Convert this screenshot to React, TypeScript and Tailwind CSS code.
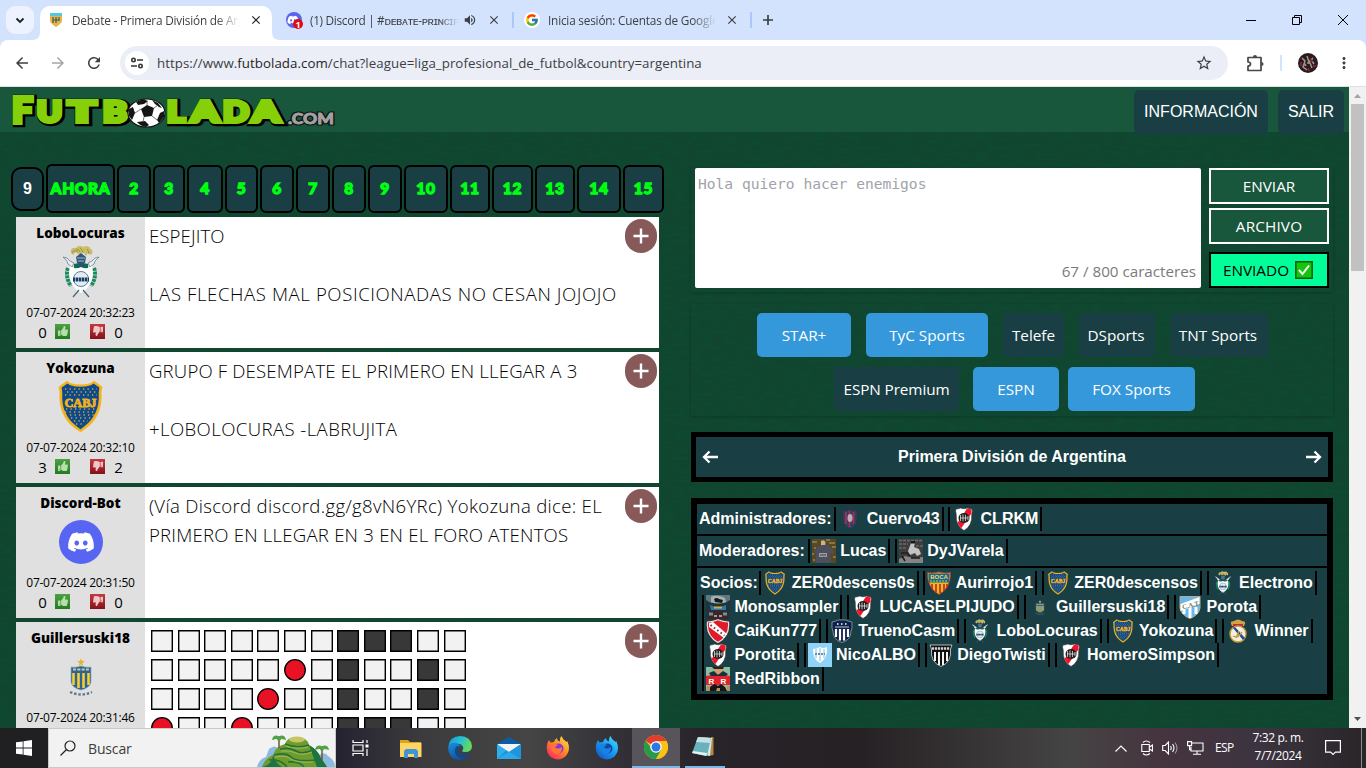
import React from 'react';
import { FcGoogle } from 'react-icons/fc';
import { FaDiscord, FaThumbsDown, FaThumbsUp } from 'react-icons/fa';
import { MdArrowBack, MdArrowForward, MdClose, MdMoreVert, MdRefresh, MdStarBorder, MdVolumeUp } from 'react-icons/md';

type P = { className?: string };

function Boca({ className }: P) {
  return (
    <svg viewBox="0 0 45 53" className={className}>
      <path d="M9 .8 12 3q10 3 21 0L36 .8l8.3 6q-1.3 5-.8 12C43 34 35 45 22.500 52.300 10 45 2 34 1.500 18.800q.5-7-.8-12Z" fill="#f5b21a" />
      <path d="M9.500 3.500 12 5.300q10 3 21 0l2.500-1.800 5.800 4q-.9 5-.5 11C40.300 32 33.500 42 22.500 49.200 11.500 42 4.700 32 4.200 18.500q.4-6-.5-11Z" fill="#0b4a8c" />
      <g stroke="#d9a531" strokeWidth="1.300" strokeDasharray="1.300 3.200">
        <path d="M7 9h32M9 12h29M7 15h32M7 32h31M12 35h24M13 38h20M16 41h14M18 44h9M8 29h30" />
      </g>
      <text x="22.500" y="27" textAnchor="middle" textLength="32" lengthAdjust="spacingAndGlyphs" fontFamily="Liberation Serif" fontWeight="700" fontSize="13" fill="#f5b21a" stroke="#f5b21a" strokeWidth=".9">CABJ</text>
    </svg>
  );
}

function River({ className }: P) {
  return (
    <svg viewBox="0 0 24 24" className={className}>
      <path d="M4 2q3 0 4.500-1Q12 2.500 15.500 1 17 2 20 2q1 2-.2 5Q20.500 19 12 23.500 3.500 19 4.200 7 3 4 4 2Z" fill="#fff" stroke="#333" strokeWidth=".6" />
      <path d="M15 1.500 19.700 2.500l-.3 4L9 21.500 5.500 16Z" fill="#f2142c" />
      <ellipse cx="12" cy="11" rx="5.500" ry="5" fill="#222" />
      <path d="M8.500 8v6M11 7.500v7M13.500 8v6M16 9v4M8 11h8" stroke="#ddd" strokeWidth=".8" />
    </svg>
  );
}

function Gimnasia({ className }: P) {
  return (
    <svg viewBox="0 0 36 53" className={className}>
      <path d="M8 8q-1-6 5-5 3-4 7-1 5-3 8 2 3 2 0 6l-3-2-2 3-3-4-4 3-3-3-3 3Z" fill="#c9bd68" />
      <path d="M9 8q2-4 6-1M17 3q3 2 3 5M24 4q2 2 2 5M13 4q3 0 4 3" stroke="#8e8436" strokeWidth=".8" fill="none" />
      <path d="m13 12 5-4 5 4-1 6h-8Z" fill="#31597a" />
      <path d="M14 13h8M15 16h6" stroke="#cfdfe8" strokeWidth=".7" />
      <path d="m0 12 4 1 3 3 4 2-2 4-4-3-1-3ZM36 12l-4 1-3 3-4 2 2 4 4-3 1-3Z" fill="#e8eef2" stroke="#54738c" strokeWidth=".7" />
      <path d="M11 19q7-2 14 0v6H11Z" fill="#0b6c50" />
      <path d="M15 18h6v4h-6Z" fill="#2f4f70" />
      <path d="M5 23q-3 9 3 18M31 23q3 9-3 18" stroke="#1a8a5e" strokeWidth="4" strokeDasharray="3 .7" fill="none" />
      <path d="M7 21q5 4 11 1 6 3 11-1l1 7q-1 14-12 20Q7 42 6 28Z" fill="#fbfdfd" />
      <path d="m10 52 6-7M26 52l-6-7" stroke="#45667c" strokeWidth="1.200" />
      <circle cx="18" cy="34" r="7.500" fill="#e4ecf1" stroke="#1b5378" strokeWidth=".7" />
      <path d="M10 34.500h16" stroke="#123f66" strokeWidth="4" strokeDasharray="2.400 .6" />
    </svg>
  );
}

function Central({ className }: P) {
  return (
    <svg viewBox="0 0 24 38" className={className}>
      <path d="m12 0 1 3h3l-2.500 2 .8 3L12 6.300 9.700 8l.8-3L8 3h3Z" fill="#e7b52c" />
      <path d="M2 9q4 1 10-1 6 2 10 1v15q-1 6-10 8-9-2-10-8Z" fill="#2f6398" stroke="#8fa9b8" strokeWidth=".7" />
      <path d="M4.500 15v12M9.500 15v15M14.500 15v15M19.500 15v12" stroke="#f3ce36" strokeWidth="2.600" />
      <path d="M4 11.500h16" stroke="#c8cf94" strokeWidth="2" strokeDasharray="3 1.300" />
      <path d="M1 34q11 5 22 0" stroke="#61798a" strokeWidth="2.400" strokeDasharray="2.500 1.800" fill="none" />
    </svg>
  );
}

function Lorenzo({ className }: P) {
  return (
    <svg viewBox="0 0 24 24" className={className}>
      <path d="M6 4q3 1 6-1 3 2 6 1 1 10-1 13-2 3-5 4-3-1-5-4-2-3-1-13Z" fill="#28406f" stroke="#5b3350" strokeWidth=".8" />
      <path d="M8 5v12M11.500 4v16M15.500 5v12" stroke="#b13048" strokeWidth="1.600" />
      <ellipse cx="12" cy="11" rx="2.500" ry="4" fill="#c2aab8" />
    </svg>
  );
}

function Independiente({ className }: P) {
  return (
    <svg viewBox="0 0 24 24" className={className}>
      <path d="M1.500 3Q7 3 12 .8 17 3 22.500 3 24 17 12 23.500 0 17 1.500 3Z" fill="#df1a2b" stroke="#f5dcdc" strokeWidth="1.200" />
      <path d="m3 4 4-1 14 12-3 4L3 8Z" fill="#fff" />
      <path d="m4.500 6 14 10.500" stroke="#902c35" strokeWidth="2" strokeDasharray="1.600 2.600" />
    </svg>
  );
}

function Talleres({ className }: P) {
  return (
    <svg viewBox="0 0 24 24" className={className}>
      <path d="M2 3q5-1 6-2h8q1 1 6 2v6l-1 3q0 9-9 11.500Q3 21 3 12L2 9Z" fill="#0e2149" stroke="#bcc5d6" strokeWidth=".6" />
      <path d="M6 10v8M10 10v11.500M14 10v11.500M18 10v8" stroke="#fff" strokeWidth="2.200" />
      <path d="M5 8h14" stroke="#eee" strokeWidth=".8" />
      <path d="M7 5h10" stroke="#fff" strokeWidth="1.500" strokeDasharray="1.500 2.500" />
    </svg>
  );
}

function Tucuman({ className }: P) {
  return (
    <svg viewBox="0 0 24 24" className={className}>
      <path d="M2 1.500h20V13q-1 7-10 10.500Q3 20 2 13Z" fill="#65b9ee" stroke="#b9ab82" />
      <path d="M6 12v7M12 12v11M18 12v7" stroke="#fff" strokeWidth="3" />
      <path d="M2.500 9 21.500 2v7L2.500 16Z" fill="#fff" />
      <text x="4" y="12.500" transform="rotate(-14 12 10)" fontSize="6.500" fontWeight="700" fontFamily="Liberation Serif" fill="#80764a">C.A.T.</text>
    </svg>
  );
}

function Madrid({ className }: P) {
  return (
    <svg viewBox="0 0 24 24" className={className}>
      <path d="M6 7Q3 2 8 2q4-3 8 0 5 0 2 5Z" fill="#d6a144" />
      <path d="M7 6h10" stroke="#b63142" strokeWidth="2" />
      <circle cx="12" cy="15" r="8" fill="#f1efdf" stroke="#c99b37" strokeWidth="1.400" />
      <path d="m7 9 10 12 2-2L9 8Z" fill="#244b9a" />
      <path d="M7 17q5 3 9-4M10 19l3-7" stroke="#c99b37" fill="none" strokeWidth="1.400" />
    </svg>
  );
}

function Riestra({ className }: P) {
  return (
    <svg viewBox="0 0 24 24" className={className}>
      <path d="M1 2h22l-1.500 4Q23 19 12 23.500 1 19 2.500 6Z" fill="#111" stroke="#ddd" strokeWidth=".8" />
      <path d="M6 9v9M10 9v13M14 9v13M18 9v9" stroke="#fff" strokeWidth="1.900" />
      <path d="M3 5.500h18" stroke="#d6d6d6" strokeWidth="2.400" strokeDasharray="2.200 .8" />
    </svg>
  );
}

function BocaColon({ className }: P) {
  return (
    <svg viewBox="0 0 24 24" className={className}>
      <path d="M.5 1.500 5 2l7-1 7 1 4.500-.5Q24 17 12 23.500 0 17 .5 1.500Z" fill="#e8bd1e" stroke="#b42c2e" strokeWidth=".8" />
      <path d="M1.500 2.500h21l-.5 9H2Z" fill="#1c659b" />
      <text x="12" y="7.500" textAnchor="middle" fontSize="6" fontWeight="700" fontFamily="Liberation Sans" fill="#f7dc38">BOCA</text>
      <path d="M3 10h18" stroke="#74b55d" strokeWidth="1.500" strokeDasharray="2 1" />
      <path d="M5 13v5M9 13v8M13 13v9M17 13v7M20 13v3" stroke="#ce2528" strokeWidth="1.700" />
    </svg>
  );
}

function Nico({ className }: P) {
  return (
    <svg viewBox="0 0 24 24" className={className}>
      <path d="M0 0h24v24H0Z" fill="#8fd3f6" />
      <path d="M5 6q4 0 7-2 3 2 7 0 1 11-7 16Q5 17 5 6Z" fill="#fff" />
      <path d="M8 6v9M12 5v13M16 6v9" stroke="#80bee0" />
      <path d="M7 11h10" stroke="#5f93b5" strokeWidth="1.800" strokeDasharray="2 1" />
    </svg>
  );
}

function Mono({ className }: P) {
  return (
    <svg viewBox="0 0 24 24" className={className}>
      <path d="M0 0h24v24H0Z" fill="#22343b" />
      <path d="M0 0h24v5l-5 3H5L0 5Z" fill="#5d787e" />
      <path d="M5 2q6-3 14 1l1 4q-8 3-15 0Z" fill="#a5b2b1" />
      <path d="M8 4q3-2 5 0l4 1-1 3-7-1Z" fill="#17191c" />
      <path d="m4 10 8 3 8-3v5H5Z" fill="#2e77ad" />
      <path d="M8 12.500h8" stroke="#d5b13b" strokeWidth="2" />
      <path d="M4 16h16l2 8H2Z" fill="#3b2528" />
      <path d="M3 19h4M17 19h4" stroke="#7c8c92" strokeWidth="3" />
      <path d="M8 21h3M13 21h3" stroke="#c9c1ba" strokeWidth="1.300" />
    </svg>
  );
}

function Ribbon({ className }: P) {
  return (
    <svg viewBox="0 0 24 24" className={className}>
      <path d="M0 0h24v24H0Z" fill="#8abda1" />
      <path d="M8 0h9v6l-5 3-4-3Z" fill="#d79c6c" />
      <path d="M6 0h12l-1 2H8Z" fill="#262126" />
      <path d="M0 9q12-3 24 0v9H0Z" fill="#e0232c" />
      <path d="m3 6 5-2 4 4 5-4 5 3-2 2H5Z" fill="#1a2f3a" />
      <text x="2.500" y="16.500" fontSize="8" fontWeight="700" fontFamily="Liberation Sans" fill="#fff">R</text>
      <text x="14.500" y="16.500" fontSize="8" fontWeight="700" fontFamily="Liberation Sans" fill="#fff">R</text>
      <path d="m2 24 3-5 4-2 3 2 3-2 4 3 2 4Z" fill="#171518" />
      <path d="M1 19h3v5H0ZM11 21h3v3h-4ZM21 19h3v5h-3Z" fill="#bb8f55" />
    </svg>
  );
}

function Lucas({ className }: P) {
  return (
    <svg viewBox="0 0 24 24" className={className}>
      <path d="M0 0h24v24H0Z" fill="#574a22" />
      <path d="M0 3h5M17 4h6M2 9h2M20 8h4M0 15h2M14 1h4M21 18h3M1 21h2" stroke="#8a7540" strokeWidth="2" />
      <path d="M9 2q3-2 4.500 1l-.5 5H9Z" fill="#d3b08e" />
      <path d="m5 8 5-2h6l5 5 1 4-4-1 1 10H4V14l-2 2 1-5Z" fill="#4c505d" />
      <path d="M7 14h8v4H7Z" fill="#9a9ca0" />
      <path d="M8 16h6" stroke="#3c3e46" />
    </svg>
  );
}

function Varela({ className }: P) {
  return (
    <svg viewBox="0 0 24 24" className={className}>
      <path d="M0 0h24v24H0Z" fill="#3e3e3e" />
      <path d="M0 1.500h24M0 5h9M17 7h7M0 9h8" stroke="#686868" strokeWidth="1.500" strokeDasharray="3 1" />
      <path d="M12 4h4l-1 4 5 2 2 5-4 2-2-3-5 2-2-4Z" fill="#c4c4c4" />
      <path d="M12 2h4v2.500h-4Z" fill="#171717" />
      <path d="m0 20 6-3 8 2 10-1v6H0Z" fill="#858585" />
      <path d="M2 14h6l3 3M12 19h9M3 17l3 5" stroke="#1e1e1e" strokeWidth="1.600" fill="none" />
    </svg>
  );
}

const pages: [string, string][] = [
  ['AHORA', 'w-[69px] h-[49px]'], ['2', 'w-[34px] h-12'], ['3', 'w-8 h-12'], ['4', 'w-9 h-12'], ['5', 'w-[33px] h-12'],
  ['6', 'w-[34px] h-12'], ['7', 'w-[34px] h-12'], ['8', 'w-[34px] h-12'], ['9', 'w-[34px] h-12'], ['10', 'w-11 h-12'],
  ['11', 'w-10 h-12'], ['12', 'w-[41px] h-12'], ['13', 'w-10 h-12'], ['14', 'w-11 h-12'], ['15', 'w-[41px] h-12'],
];

const board = ['.......###..', '.....o.#..#.', '....o..#..#.', 'o..o...###..'];

function Board() {
  return (
    <div className="ml-1.5 mt-2 flex flex-col gap-[7px]">
      {board.map((row, r) => (
        <div key={r} className="flex gap-[4.600px]">
          {row.split('').map((c, i) => (
            <svg key={i} viewBox="0 0 22 22" className="h-[22px] w-[22px] shrink-0">
              {c === 'o' ? (
                <circle cx="11" cy="11" r="10.300" fill="#e81224" stroke="#000" strokeWidth="1.300" />
              ) : (
                <path d="M.7.7h20.600v20.600H.7Z" fill={c === '#' ? '#383838' : '#f2f2f2'} stroke="#000" strokeWidth="1.400" />
              )}
            </svg>
          ))}
        </div>
      ))}
    </div>
  );
}

function Vote({ up }: { up?: boolean }) {
  return (
    <span className={up ? 'grid h-[15px] w-[15px] place-items-center bg-gradient-to-b from-[#4fa044] to-[#227a20]' : 'grid h-[15px] w-[15px] place-items-center bg-gradient-to-b from-[#c33a40] to-[#84121a]'}>
      {up ? <FaThumbsUp className="h-[10px] w-[10px] text-[#b5e0ab]" /> : <FaThumbsDown className="h-[10px] w-[10px] -scale-x-100 text-[#f2c6c8]" />}
    </span>
  );
}

function Message({ name, date, votes, avatar, children }: { name: string; date: string; votes?: [string, string]; avatar: React.ReactNode; children: React.ReactNode }) {
  return (
    <article className="flex h-[131px] shrink-0 bg-white text-black">
      <div className="flex w-[129px] shrink-0 flex-col items-center bg-[#e0e0e0]">
        <div className="mt-1.5 h-5 text-[13.500px] leading-5 font-extrabold">{name}</div>
        <div className="flex h-[57px] items-center">{avatar}</div>
        <div className="mt-[5px] h-4 text-xs leading-4 tracking-[-0.250px] whitespace-nowrap">{date}</div>
        {votes && (
          <div className="flex h-5 items-center text-[15px] leading-5">
            <span className="w-[13px] pt-0.5 text-center">{votes[0]}</span>
            <span className="ml-1.5"><Vote up /></span>
            <span className="ml-5"><Vote /></span>
            <span className="ml-[7px] w-[13px] pt-0.5 text-center">{votes[1]}</span>
          </div>
        )}
      </div>
      <div className="min-w-0 flex-1">{children}</div>
      <button className="mt-0.5 mr-0.5 grid h-[34px] w-8 shrink-0 place-items-center rounded-full bg-[#875a59]">
        <svg viewBox="0 0 16 16" className="h-4 w-4"><path d="M8 .5v15M.5 8h15" stroke="#fff" strokeWidth="2.400" /></svg>
      </button>
    </article>
  );
}

function Member({ icon, name }: { icon: React.ReactNode; name: string }) {
  return (
    <span className="flex h-6 shrink-0 items-center border-x-2 border-black px-0.5">
      <span className="grid h-6 w-6 place-items-center">{icon}</span>
      <span className="ml-[4.400px]">{name}</span>
    </span>
  );
}

const i24 = 'h-6 w-6';
const partners: [React.ReactNode, string][][] = [
  [[<Boca className={i24} />, 'ZER0descens0s'], [<BocaColon className={i24} />, 'Aurirrojo1'], [<Boca className={i24} />, 'ZER0descensos'], [<Gimnasia className={i24} />, 'Electrono']],
  [[<Mono className={i24} />, 'Monosampler'], [<River className={i24} />, 'LUCASELPIJUDO'], [<Central className="h-[15px] w-4" />, 'Guillersuski18'], [<Tucuman className={i24} />, 'Porota']],
  [[<Independiente className={i24} />, 'CaiKun777'], [<Talleres className={i24} />, 'TruenoCasm'], [<Gimnasia className={i24} />, 'LoboLocuras'], [<Boca className={i24} />, 'Yokozuna'], [<Madrid className={i24} />, 'Winner']],
  [[<River className={i24} />, 'Porotita'], [<Nico className={i24} />, 'NicoALBO'], [<Riestra className={i24} />, 'DiegoTwisti'], [<River className={i24} />, 'HomeroSimpson']],
  [[<Ribbon className={i24} />, 'RedRibbon']],
];

function Logo() {
  return (
    <svg width="330" height="42" className="ml-2 mt-0.5" fontFamily="Lato, Inter, sans-serif" fontWeight="900">
      {[{ f: '#000', dx: 1.5, dy: 1, s: 6.5 }, { f: '#86d00a', dx: 0, dy: 0, s: 4 }].map((l, i) => (
        <g key={i} fill={l.f} stroke={l.f} strokeWidth={l.s} transform={`translate(${l.dx} ${l.dy})`} strokeLinejoin="miter">
          <text x="4" y="33.500" fontSize="36" textLength="21" lengthAdjust="spacingAndGlyphs">F</text>
          <text y="33" fontSize="28"><tspan x="29" textLength="25" lengthAdjust="spacingAndGlyphs">U</tspan><tspan x="60" textLength="28" lengthAdjust="spacingAndGlyphs">T</tspan><tspan x="95" textLength="24" lengthAdjust="spacingAndGlyphs">B</tspan></text>
          <text y="33" fontSize="28"><tspan x="159" textLength="18" lengthAdjust="spacingAndGlyphs">L</tspan><tspan x="183" textLength="28" lengthAdjust="spacingAndGlyphs">A</tspan><tspan x="215" textLength="26" lengthAdjust="spacingAndGlyphs">D</tspan><tspan x="244" textLength="28" lengthAdjust="spacingAndGlyphs">A</tspan></text>
        </g>
      ))}
      <text x="280" y="34.500" fontSize="14.500" textLength="46" lengthAdjust="spacingAndGlyphs" fill="#222" stroke="#111" strokeWidth="3.200">.COM</text>
      <text x="280" y="34.500" fontSize="14.500" textLength="46" lengthAdjust="spacingAndGlyphs" fill="#a2a2a2" stroke="#a2a2a2" strokeWidth=".8">.COM</text>
      <ellipse cx="138.500" cy="24" rx="18.500" ry="14" fill="#fff" stroke="#111" strokeWidth="1.200" />
      <path d="m133 20 6-4 7 3-2 8-8 1Zm-5-7 7-3 5 2-4 3-6 1Zm16-2 6 3 4 5-3-1-4-3ZM121 20l4-2 2 6-3 7-3-4Zm31 4 4-2v6l-5 6-2-3ZM129 33l8-1 4 4-3 2q-6-1-9-5Z" fill="#151515" />
      <path d="m127 24 6-4M146 19l4-3M144 27l5 4M136 28l-1 5M139 16v-4" stroke="#555" strokeWidth=".8" />
    </svg>
  );
}

function TabFlare({ right }: { right?: boolean }) {
  return (
    <svg viewBox="0 0 8 8" className={right ? 'absolute -right-2 bottom-0 h-2 w-2 -scale-x-100' : 'absolute bottom-0 -left-2 h-2 w-2'}>
      <path d="M8 0q0 8-8 8h8Z" fill="#fff" />
    </svg>
  );
}

const cut = 'overflow-hidden whitespace-nowrap [mask-image:linear-gradient(to_right,#000_86%,transparent)]';

function Browser() {
  return (
    <header className="shrink-0 bg-[#d3e3fd] font-['Open_Sans',sans-serif] text-[#3c3f43]">
      <div className="flex h-10 text-[11.800px]">
        <button className="mt-1.5 ml-1.5 grid h-7 w-7 place-items-center rounded-[9px] bg-[#ecf2fe]">
          <svg viewBox="0 0 10 10" className="h-2.5 w-2.5"><path d="m1.500 3.500 3.500 3.500 3.500-3.500" stroke="#1f1f1f" strokeWidth="1.800" fill="none" /></svg>
        </button>
        <div className="relative mt-1.5 ml-1.5 flex h-[34px] w-[232px] items-center rounded-t-[10px] bg-white pb-1.5">
          <TabFlare /><TabFlare right />
          <svg viewBox="0 0 12 14" className="ml-[10px] h-3.5 w-3"><path d="M0 0h12v8q-1 3-6 6-5-3-6-6Z" fill="#e7b548" /><path d="M0 0h12v3H0Z" fill="#55c7dd" /><path d="M3 4v6M6 4v6M9 4v4M3 7h6" stroke="#2f5c63" strokeWidth="1.200" /></svg>
          <span className={`ml-[10px] w-[168px] pt-px tracking-[-0.200px] ${cut}`}>Debate - Primera División de Argentina</span>
          <MdClose className="ml-[9px] h-3.5 w-3.5 text-[#1f1f1f]" />
        </div>
        <div className="mt-1.5 flex h-7 items-center">
          <span className="relative ml-[14px] grid h-4 w-4 place-items-center rounded-full bg-[#5865f2]">
            <FaDiscord className="mr-0.5 h-3 w-3 text-white" />
            <span className="absolute -right-px -bottom-px grid h-[10px] w-[10px] place-items-center rounded-full bg-[#e00b16] text-[9px] leading-none font-bold text-white">1</span>
          </span>
          <span className={`ml-2 w-[149px] pt-px tracking-[-0.300px] ${cut}`}>(1) Discord | #ᴅᴇʙᴀᴛᴇ-ᴘʀɪɴᴄɪᴘᴀʟ</span>
          <MdVolumeUp className="ml-1 h-3.5 w-3.5" />
          <MdClose className="ml-[10px] h-3.5 w-3.5" />
          <span className="ml-[11px] h-4 w-0.5 bg-[#a8c7fa]" />
          <span className="ml-[10px] grid h-4 w-4 place-items-center rounded-full bg-white"><FcGoogle className="h-3.5 w-3.5" /></span>
          <span className={`ml-2 w-[168px] pt-px tracking-[-0.200px] ${cut}`}>Inicia sesión: Cuentas de Google</span>
          <MdClose className="ml-[9px] h-3.5 w-3.5" />
          <span className="ml-[11px] h-4 w-0.5 bg-[#a8c7fa]" />
          <svg viewBox="0 0 12 12" className="ml-2.5 h-3 w-3"><path d="M6 1v10M1 6h10" stroke="#3c3f43" strokeWidth="1.700" /></svg>
        </div>
        <div className="mr-[18px] ml-auto flex h-10 items-center gap-9">
          <svg viewBox="0 0 10 10" className="h-2.5 w-2.5"><path d="M0 5.500h10" stroke="#000" /></svg>
          <svg viewBox="0 0 10 10" className="h-2.5 w-2.5"><path d="M.5 2.500h7v7h-7ZM2.500 2.500v-2h7v7h-2" fill="none" stroke="#000" /></svg>
          <svg viewBox="0 0 10 10" className="h-2.5 w-2.5"><path d="m0 0 10 10M10 0 0 10" stroke="#000" /></svg>
        </div>
      </div>
      <div className="flex h-[47px] items-center rounded-t-lg border-b border-[#dcdfe3] bg-white">
        <MdArrowBack className="ml-[13px] h-[18px] w-[18px]" />
        <MdArrowForward className="ml-[18px] h-[18px] w-[18px] text-[#a3a5a8]" />
        <MdRefresh className="ml-[18px] h-[18px] w-[18px]" />
        <div className="ml-[17px] flex h-[34px] w-[1108px] items-center rounded-full bg-[#ebeef7]">
          <span className="ml-[5px] grid h-6 w-6 place-items-center rounded-full bg-white">
            <svg viewBox="0 0 14 12" className="h-3 w-3.5"><g fill="none" stroke="#333" strokeWidth="1.600"><circle cx="3.500" cy="3" r="1.700" /><path d="M7 3h6M1 9h6" /><circle cx="10.500" cy="9" r="1.700" /></g></svg>
          </span>
          <span className="ml-2 pt-px text-[13.300px] tracking-[0.045px]">https://www.<span className="text-[#1f1f1f]">futbolada.com</span>/chat?league=liga_profesional_de_futbol&amp;country=argentina</span>
          <MdStarBorder className="mr-[15px] ml-auto h-[18px] w-[18px]" />
        </div>
        <svg viewBox="0 0 18 18" className="ml-[18px] h-[18px] w-[18px]"><path d="M2 3.500h13v13H2v-4.500q2.500 0 2.500-2T2 8Z" fill="none" stroke="#44474b" strokeWidth="1.700" strokeLinejoin="round" /><path d="M7 3q0-2 2-2t2 2ZM15.500 8q2 0 2 2t-2 2Z" fill="#44474b" /></svg>
        <span className="ml-4 h-4 w-0.5 bg-[#d3e3fd]" />
        <svg viewBox="0 0 20 20" className="ml-4 h-5 w-5"><circle cx="10" cy="10" r="10" fill="#2a1c1e" /><path d="m4 5 3 3-2 6 4 3M9 3l2 6 4-4M9 10h3l2 5M6 10l2 3M14 8l2 3" stroke="#a3948e" strokeWidth="1.500" fill="none" /><path d="M3 9v4M12 6l2 3M15 13h3M10 15l1 3" stroke="#7d2329" strokeWidth="2" /></svg>
        <MdMoreVert className="ml-[17px] h-[18px] w-[18px]" />
      </div>
    </header>
  );
}

const chOn = 'grid h-11 place-items-center rounded-[5px] bg-[#3498db]';
const chOff = 'grid h-11 place-items-center rounded-[5px] bg-[#193f44]';

function Page() {
  return (
    <div className="relative flex h-full w-[1349px] flex-col overflow-hidden bg-[#11452f]">
      <svg className="pointer-events-none absolute inset-0 h-full w-full opacity-20">
        <filter id="cloth"><feTurbulence type="fractalNoise" baseFrequency="0.08 0.3" numOctaves="3" seed="4" /><feColorMatrix values="0 0 0 0 0  0 0 0 0 .12  0 0 0 0 .05  2 0 0 0 -.7" /></filter>
        <rect width="100%" height="100%" filter="url(#cloth)" />
      </svg>
      <div className="relative flex h-[45px] shrink-0 bg-[#18573c] font-['Liberation_Sans',Arial,sans-serif] text-base text-white">
        <Logo />
        <div className="mt-[3px] mr-[5px] ml-auto flex gap-[10px]">
          <button className="h-11 w-[134px] rounded-[5px] bg-[#193f44]">INFORMACIÓN</button>
          <button className="h-11 w-[66px] rounded-[5px] bg-[#193f44]">SALIR</button>
        </div>
      </div>
      <div className="relative flex flex-1 overflow-hidden">
        <section className="w-[664px] shrink-0">
          <nav className="mt-8 ml-[11px] flex h-[49px] items-center gap-0.5">
            <span className="grid h-11 w-[33px] place-items-center rounded-[10px] border-2 border-black bg-[#193f44] font-['Liberation_Sans',Arial,sans-serif] text-base font-bold text-white">9</span>
            {pages.map(([t, c]) => (
              <button key={t} className={`${c} grid shrink-0 place-items-center rounded-[6px] border-2 border-black bg-[#193f44] font-['Lato',sans-serif] text-[15.500px] font-black tracking-[0.700px] text-[#0f1] [-webkit-text-stroke:1.300px_#0f1]`}>{t}</button>
            ))}
          </nav>
          <div className="mt-1 ml-4 flex w-[643px] flex-col gap-1 text-[18.600px] leading-[29px]">
            <Message name="LoboLocuras" date="07-07-2024 20:32:23" votes={['0', '0']} avatar={<Gimnasia className="h-[53px] w-9" />}>
              <div className="mt-1 ml-1 font-light">
                <p className="tracking-[0.100px]">ESPEJITO</p>
                <p className="mt-[29px] tracking-[0.590px] whitespace-nowrap">LAS FLECHAS MAL POSICIONADAS NO CESAN JOJOJO</p>
              </div>
            </Message>
            <Message name="Yokozuna" date="07-07-2024 20:32:10" votes={['3', '2']} avatar={<Boca className="h-[53px] w-[45px]" />}>
              <div className="mt-1 ml-1 font-light">
                <p className="tracking-[0.170px]">GRUPO F DESEMPATE EL PRIMERO EN LLEGAR A 3</p>
                <p className="mt-[29px] tracking-[0.400px]">+LOBOLOCURAS -LABRUJITA</p>
              </div>
            </Message>
            <Message name="Discord-Bot" date="07-07-2024 20:31:50" votes={['0', '0']} avatar={<span className="grid h-11 w-11 place-items-center rounded-full bg-[#5865f2]"><FaDiscord className="h-7 w-7 text-white" /></span>}>
              <div className="mt-1 ml-1 font-light whitespace-nowrap">
                <p className="tracking-[0.310px]">(Vía Discord discord.gg/g8vN6YRc) Yokozuna dice: EL</p>
                <p className="tracking-[0.210px]">PRIMERO EN LLEGAR EN 3 EN EL FORO ATENTOS</p>
              </div>
            </Message>
            <Message name="Guillersuski18" date="07-07-2024 20:31:46" avatar={<Central className="h-[38px] w-6" />}>
              <Board />
            </Message>
          </div>
        </section>
        <section className="ml-[27px] w-[642px] pt-9">
          <div className="flex h-[124px] gap-2 pl-1 shadow-[0_1px_3px_#0003]">
            <div className="flex h-[120px] w-[506px] flex-col justify-between rounded-[2px] bg-white">
              <p className="mt-1.5 ml-[3px] font-['DejaVu_Sans_Mono',monospace] text-[14.600px] leading-5 text-[#a0a3aa]">Hola quiero hacer enemigos</p>
              <p className="mr-[5px] mb-1.5 text-right text-[15.200px] leading-[22px] text-[#7b7b7b]">67 / 800 caracteres</p>
            </div>
            <div className="flex w-[120px] flex-col text-[15.300px] text-white">
              <button className="h-9 border-2 border-white bg-[#18573c]">ENVIAR</button>
              <button className="mt-1 h-9 border-2 border-white bg-[#18573c] tracking-[0.150px]">ARCHIVO</button>
              <button className="mt-2 flex h-9 items-center justify-center gap-1.5 border-2 border-black bg-[#00ff99] pr-0.5 text-black">ENVIADO
                <svg viewBox="0 0 18 18" className="h-[18px] w-[18px]"><path d="M.8.8h16.400v16.400H.8Z" fill="#16c60c" stroke="#0b5c12" strokeWidth="1.500" /><path d="m4 9 3.500 4L14 4.500" stroke="#fff" strokeWidth="2" fill="none" /></svg>
              </button>
            </div>
          </div>
          <div className="mt-3 flex h-[112px] flex-col gap-[10px] pt-[9px] text-[15.300px] text-white shadow-[0_1px_3px_#0003]">
            <div className="ml-[66px] flex gap-[15px]">
              <button className={`${chOn} w-[94px]`}>STAR+</button>
              <button className={`${chOn} w-[122px]`}>TyC Sports</button>
              <button className={`${chOff} w-[61px]`}>Telefe</button>
              <button className={`${chOff} w-[76px] pr-0.5`}>DSports</button>
              <button className={`${chOff} w-[98px] pr-0.5`}>TNT Sports</button>
            </div>
            <div className="ml-[143px] flex">
              <button className={`${chOff} w-[125px] tracking-[-0.100px]`}>ESPN Premium</button>
              <button className={`${chOn} ml-[14px] w-[86px]`}>ESPN</button>
              <button className={`${chOn} ml-[9px] w-[127px]`}>FOX Sports</button>
            </div>
          </div>
          <div className="mt-4 flex h-[50px] items-center justify-between border-[5px] border-black bg-[#193f44] px-[5px] font-['Liberation_Sans',Arial,sans-serif] text-base font-bold text-white">
            <svg viewBox="0 0 18 14" className="h-3.5 w-[18px]"><path d="M17 7H3M8.500 1.500 3 7l5.500 5.500" stroke="#fff" strokeWidth="2.300" fill="none" /></svg>
            Primera División de Argentina
            <svg viewBox="0 0 18 14" className="h-3.5 w-[18px]"><path d="M1 7h14M9.500 1.500 15 7l-5.500 5.500" stroke="#fff" strokeWidth="2.300" fill="none" /></svg>
          </div>
          <div className="mt-4 h-[202px] border-[6px] border-black bg-[#193f44] font-['Liberation_Sans',Arial,sans-serif] text-base font-bold whitespace-nowrap text-white">
            <div className="flex h-8 items-center gap-[4.440px] border-b-2 border-black pl-0.5">
              <span className="-mr-[1.500px]">Administradores:</span><Member icon={<Lorenzo className={i24} />} name="Cuervo43" /><Member icon={<River className={i24} />} name="CLRKM" />
            </div>
            <div className="flex h-8 items-center gap-[4.440px] border-b-2 border-black pl-0.5">
              <span className="-mr-[1.500px]">Moderadores:</span><Member icon={<Lucas className={i24} />} name="Lucas" /><Member icon={<Varela className={i24} />} name="DyJVarela" />
            </div>
            <div className="pt-[3px] pl-[3px]">
              {partners.map((row, r) => (
                <div key={r} className={r ? 'ml-0.5 flex h-6 items-center gap-[4.800px]' : 'flex h-6 items-center gap-[4.800px]'}>
                  {r === 0 && <span className="-mr-[3.200px]">Socios:</span>}
                  {row.map(([icon, name]) => <Member key={name} icon={icon} name={name} />)}
                </div>
              ))}
            </div>
          </div>
        </section>
      </div>
    </div>
  );
}

function Scrollbar() {
  return (
    <div className="flex w-[17px] flex-col items-center bg-[#f1f1f1]">
      <svg viewBox="0 0 17 17" className="h-[17px] w-[17px]"><path d="m5 11 3.500-4 3.500 4Z" fill="#a3a3a3" /></svg>
      <div className="h-[167px] w-[13px] bg-[#c1c1c1]" />
      <svg viewBox="0 0 17 17" className="mt-auto h-[17px] w-[17px]"><path d="m5 6 3.500 4L12 6Z" fill="#505050" /></svg>
    </div>
  );
}

function Fox({ blue }: { blue?: boolean }) {
  const id = blue ? 'fxb' : 'fxo';
  return (
    <svg viewBox="0 0 24 24" className="h-6 w-6">
      <defs><linearGradient id={id} x1="1" y1="0" x2="0.200" y2="1"><stop offset="0" stopColor={blue ? '#4be3fb' : '#fff04a'} /><stop offset=".5" stopColor={blue ? '#18a0f5' : '#ff8a22'} /><stop offset="1" stopColor={blue ? '#1457c8' : '#fb2466'} /></linearGradient></defs>
      <path d="M1 14Q0 8 3 4l1.500 2.500L8 6q.5-2.500 3-4 0 2.500 3 3.500Q13.500 2 15.500 0q1 3.500 5 6l.7-1Q25.500 14 19.500 20.500q-7 5.500-14 1Q1.500 19 1 14Z" fill={`url(#${id})`} />
      <circle cx="12.500" cy="12.500" r="5" fill={blue ? '#17449c' : '#8438dc'} />
      <path d="M4 9q4-3 8 0l-3 2q2 3 7 0 0 7-5 7-6-1-7-9Z" fill={blue ? '#1684e3' : '#ff7436'} />
    </svg>
  );
}

function Taskbar() {
  return (
    <footer className="flex h-10 shrink-0 bg-[linear-gradient(to_right,#242230_336px,#3b3b3d_420px,#454545_530px,#343238_610px,#29242a_700px,#262124_860px,#454444_1070px,#46343f_1160px,#3c3440_1260px,#292527_1366px)] font-['Open_Sans',sans-serif] text-white">
      <div className="grid w-12 place-items-center bg-[#201f22]">
        <svg viewBox="0 0 16 16" className="h-4 w-4"><path d="M0 2.300 6.700 1.400v6.200H0ZM7.500 1.300 16 0v7.600H7.500ZM0 8.400h6.700v6.200L0 13.700ZM7.500 8.400H16V16l-8.500-1.200Z" fill="#fff" /></svg>
      </div>
      <div className="flex w-72 items-center overflow-hidden border border-[#c9c9c9] bg-[#f2f2f2] text-[14px] text-[#3d3d3d]">
        <svg viewBox="0 0 16 16" className="ml-[11px] h-4 w-4"><circle cx="10" cy="6" r="5" fill="none" stroke="#222" strokeWidth="1.200" /><path d="m6.500 9.500-6 6" stroke="#222" strokeWidth="1.200" /></svg>
        <span className="ml-3 tracking-[-0.150px]">Buscar</span>
        <svg viewBox="0 0 78 32" className="ml-auto h-8 w-[78px] self-end">
          <path d="M0 32q2-8 9-10l3-8q6-5 10 0l6 0 34 6q6-4 9 1 7 4 7 11Z" fill="#8dbbe0" />
          <path d="M5 32q3-9 11-12 3-9 12-11 2-7 12-7t12 8q8 5 12 13l6 9Z" fill="#6f9c2f" />
          <path d="M5 32q10-2 11-12 2 8 9 12ZM52 10q9 5 12 13l6 9H60Z" fill="#1c7540" />
          <ellipse cx="40" cy="4.500" rx="8" ry="3" fill="#c8c565" />
          <path d="M28 9q12 5 24 1M23 14q10-2 16 2t17-1M17 20q12-3 17 2t24 3M12 25q12-1 18 7M31 27q12-1 16 5" fill="none" stroke="#24733a" strokeWidth="1.600" />
          <path d="M29 11q11 4 22 1M24 16q9-1 15 2t16-1M18 22q11-2 16 2t22 3" fill="none" stroke="#a7b84c" strokeWidth="1" />
          <path d="M22 13V4M65 25V14" stroke="#7a5335" strokeWidth="1.500" />
          <path d="M16 4q1-4 6-2 5-2 6 2l-4-1-2 3-2-3ZM59 14q1-4 6-2 5-2 6 2l-4-1-2 3-2-3Z" fill="#56a148" stroke="#56a148" strokeWidth="1.500" />
        </svg>
      </div>
      <div className="grid w-12 place-items-center">
        <svg viewBox="0 0 17 16" className="h-4 w-[17px]" fill="none" stroke="#fff" strokeWidth="1.200"><path d="M1 0v2.500h10V0M1 16v-2.500h10V16M1 5h10v6H1ZM15 0v3M15 9v7" /><path d="M13.500 4.500h3v3h-3Z" fill="#fff" stroke="none" /></svg>
      </div>
      <div className="ml-0.5 grid w-[49px] place-items-center">
        <svg viewBox="0 0 22 19" className="h-[19px] w-[22px]"><path d="M0 1h8l2 2h11v14H0Z" fill="#e1a11f" /><path d="M0 4h21.500v14H0Z" fill="#fdd663" /><path d="M4 19v-7l2-2h10l2 2v7h-4v-4H8v4Z" fill="#4095d8" /></svg>
      </div>
      <div className="grid w-[49px] place-items-center">
        <svg viewBox="0 0 24 24" className="h-6 w-6">
          <defs><linearGradient id="e1" x2="1" y2=".3"><stop stopColor="#1699e0" /><stop offset=".6" stopColor="#2ac3d0" /><stop offset="1" stopColor="#65d957" /></linearGradient><linearGradient id="e2" x2=".5" y2="1"><stop stopColor="#1b8fdc" /><stop offset="1" stopColor="#0d50a0" /></linearGradient></defs>
          <path d="M.3 11Q1 .5 12 0q11 .5 12 10 0 6-7 6-3 0-3-1 2-2 1-4-2-4-7-3-5 0-7.700 3Z" fill="url(#e1)" />
          <path d="M.2 11q2-5 8-4 3 1 4.500 3-4 2-2 6 3 5 11 1-3 7-10 7Q0 23 .2 11Z" fill="url(#e2)" />
          <path d="M9 10q-4 4-1 9 4 5 10 3 3-2 4-5-8 4-11-1-2-4 1-6Z" fill="#174780" />
        </svg>
      </div>
      <div className="grid w-[49px] place-items-center">
        <svg viewBox="0 0 24 22" className="h-[22px] w-6"><path d="m0 7 12-7 12 7v5H0Z" fill="#0b5ca8" /><path d="M1 7h22v8H1Z" fill="#f3f3f3" /><path d="M0 7v15h24V7L12 15Z" fill="#2db0ee" /><path d="m24 7-12 8-3-1.500L0 22h24Z" fill="#1e96df" /><path d="m12 15 12 7H0Z" fill="#3cbcf2" opacity=".5" /></svg>
      </div>
      <div className="grid w-[49px] place-items-center"><Fox /></div>
      <div className="grid w-[49px] place-items-center"><Fox blue /></div>
      <div className="ml-px grid w-12 place-items-center border-b-2 border-[#76b9ed] bg-[#57545c]">
        <svg viewBox="0 0 24 24" className="h-6 w-6"><circle cx="12" cy="12" r="12" fill="#fbc116" /><path d="M12 12 1.600 6A12 12 0 0 1 22.400 6H12Z" fill="#e33b2e" /><path d="M1.600 6A12 12 0 0 0 12 24l5.200-9L12 12H6.800Z" fill="#269b48" /><path d="M12 6h10.400A12 12 0 0 1 12 24l5.200-9Z" fill="#fbc116" /><circle cx="12" cy="12" r="5.800" fill="#fff" /><circle cx="12" cy="12" r="4.500" fill="#2f76e8" /></svg>
      </div>
      <div className="ml-[5px] grid w-10 place-items-center border-b-2 border-[#76b9ed]">
        <svg viewBox="0 0 24 24" className="mr-1 h-6 w-6"><path d="M20 2h2.500v18L17 21Z" fill="#b6893c" /><path d="m8 2 13 1-2 18-9-2Z" fill="#d4e8e9" /><path d="m7 2 13 1-4 18L1 18Z" fill="#69b1bd" /><path d="m7 2 13 1-1 5L5 7Z" fill="#c5dfe2" /><path d="m2 16 14 2-.7 3L1 18Z" fill="#e1f1f2" /></svg>
      </div>
      <div className="ml-auto flex items-center">
        <svg viewBox="0 0 12 7" className="h-[7px] w-3"><path d="m.5 6.500 5.500-5.500 5.500 5.500" fill="none" stroke="#fff" strokeWidth="1.200" /></svg>
        <svg viewBox="0 0 12 16" className="ml-[14px] h-4 w-3" fill="none" stroke="#fff" strokeWidth="1.100"><path d="M.8 4.500h7.500v7H.8ZM8.500 7l3-2v6l-3-2M2 2.500q3-3 7 0M2 13.500q3 3 7 0" /></svg>
        <svg viewBox="0 0 17 14" className="ml-[9px] h-3.5 w-[17px]" fill="none" stroke="#fff" strokeWidth="1.100"><path d="M.7 4.500h2.500L6.500 1v12L3.200 9.500H.7ZM8.500 5q1.500 2 0 4M10.500 3q3 4 0 8" /><path d="M13 1.500q4 5.500 0 11" stroke="#999" /></svg>
        <svg viewBox="0 0 17 14" className="ml-2 h-3.5 w-[17px]" fill="none" stroke="#fff" strokeWidth="1.100"><path d="M5 2h11v8H4V6M10 10v3M6 13.300h8M.6.6h4v4h-4ZM2.600 4.600v4h1.500" /></svg>
        <span className="ml-[11px] w-[19px] text-[12px] tracking-[-0.600px]">ESP</span>
        <div className="mb-0.5 ml-[17px] w-[54px] text-center text-[12px] leading-[18px] tracking-[-0.350px] whitespace-nowrap"><div>7:32 p. m.</div><div>7/7/2024</div></div>
        <svg viewBox="0 0 16 16" className="ml-5 h-4 w-4"><path d="M.6.6h14.800v11.500h-5L8 14.500l-2.400-2.400h-5Z" fill="none" stroke="#fff" strokeWidth="1.200" /></svg>
        <span className="ml-5 h-10 w-px bg-[#8c898c]" />
        <span className="w-1" />
      </div>
    </footer>
  );
}

export default function App() {
  return (
    <div className="flex h-[768px] w-[1366px] flex-col overflow-hidden font-['Open_Sans',sans-serif]">
      <Browser />
      <main className="flex min-h-0 flex-1 overflow-hidden">
        <Page />
        <Scrollbar />
      </main>
      <Taskbar />
    </div>
  );
}
